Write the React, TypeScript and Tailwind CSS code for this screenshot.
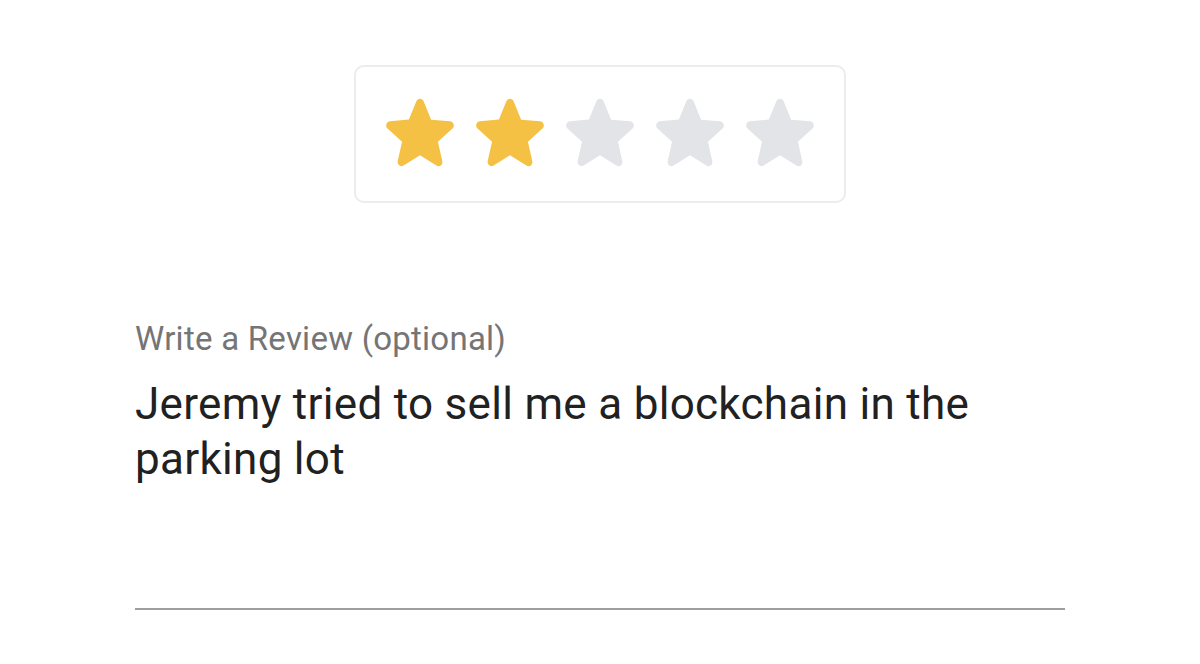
import { useState } from 'react'

const STAR_PATH =
  'M12 17.27l4.15 2.51c.76.46 1.69-.22 1.49-1.08l-1.1-4.72 3.67-3.18c.67-.58.31-1.68-.57-1.75l-4.83-.41-1.89-4.46c-.34-.81-1.5-.81-1.84 0L9.19 8.63l-4.83.41c-.88.07-1.24 1.17-.57 1.75l3.67 3.18-1.1 4.72c-.2.86.73 1.54 1.49 1.08l4.15-2.5z'

function StarRating({ value, onChange }: { value: number; onChange: (v: number) => void }) {
  return (
    <div className="flex items-center gap-[22px] rounded-[10px] border-2 border-[#ececec] bg-white px-[30px] pt-[31px] pb-[32px]">
      {[1, 2, 3, 4, 5].map((n) => (
        <button key={n} type="button" onClick={() => onChange(n)} className="block">
          <svg viewBox="3.4 3.4 17.2 17.2" preserveAspectRatio="none" className="block h-[71px] w-[68px]">
            <path d={STAR_PATH} fill={n <= value ? '#f4c145' : '#e3e4e8'} />
          </svg>
        </button>
      ))}
    </div>
  )
}

export default function App() {
  const [rating, setRating] = useState(2)

  return (
    <div className="h-[664px] w-[1200px] overflow-hidden bg-white font-['Roboto',sans-serif]">
      <div className="flex justify-center pt-[65px]">
        <StarRating value={rating} onChange={setRating} />
      </div>

      {/* Review */}
      <div className="px-[135px] pt-[116px]">
        <label className="block text-[33px] leading-[40px] tracking-[0.25px] text-[#757575]">
          Write a Review (optional)
        </label>
        <p className="mt-[18px] text-[44px] leading-[55px] tracking-[0.3px] text-[#212121]">
          Jeremy tried to sell me a blockchain in the
          <br />
          parking lot
        </p>
        <div className="mt-[121px] h-[2px] bg-[#9e9e9e]" />
      </div>
    </div>
  )
}
